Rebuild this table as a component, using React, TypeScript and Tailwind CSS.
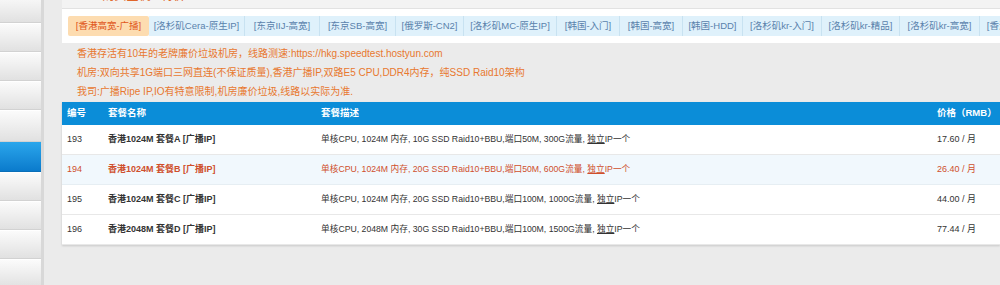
import React from "react";

// ─── Data ─────────────────────────────────────────────────────────────────────

const TABS: [string, string][] = [
  ["[香港高宽-广播]", "w-[81px]"],
  ["[洛杉矶Cera-原生IP]", "w-[96px]"],
  ["[东京IIJ-高宽]", "w-[75px]"],
  ["[东京SB-高宽]", "w-[76px]"],
  ["[俄罗斯-CN2]", "w-[68px]"],
  ["[洛杉矶MC-原生IP]", "w-[93px]"],
  ["[韩国-入门]", "w-[63px]"],
  ["[韩国-高宽]", "w-[63px]"],
  ["[韩国-HDD]", "w-[60px]"],
  ["[洛杉矶kr-入门]", "w-[79px]"],
  ["[洛杉矶kr-精品]", "w-[78px]"],
  ["[洛杉矶kr-高宽]", "w-[80px]"],
  ["[香港高宽-原生]", "w-[80px]"],
];

interface Plan { id: number; name: string; cpu: string; mem: string; disk: string; port: string; flow: string; price: string }

const PLANS: Plan[] = [
  { id: 193, name: "香港1024M 套餐A [广播IP]", cpu: "单核CPU", mem: "1024M", disk: "10G", port: "50M", flow: "300G", price: "17.60" },
  { id: 194, name: "香港1024M 套餐B [广播IP]", cpu: "单核CPU", mem: "1024M", disk: "20G", port: "50M", flow: "600G", price: "26.40" },
  { id: 195, name: "香港1024M 套餐C [广播IP]", cpu: "单核CPU", mem: "1024M", disk: "20G", port: "100M", flow: "1000G", price: "44.00" },
  { id: 196, name: "香港2048M 套餐D [广播IP]", cpu: "单核CPU", mem: "2048M", disk: "30G", port: "100M", flow: "1500G", price: "77.44" },
];

const SIDE = ["h-[29px]", "h-[29px]", "h-[29px]", "h-[29px]", "h-[32px]", "h-[30px]", "h-[29px]", "h-[29px]", "h-[29px]", "h-[29px]"];

const FONT = { fontFamily: '"Liberation Sans", "Noto Sans CJK SC", sans-serif' };

// ─── Main ─────────────────────────────────────────────────────────────────────

export default function App() {
  return (
    <div className="flex w-[1000px] h-[285px] overflow-hidden bg-[#ebebeb]" style={FONT}>
      {/* sidebar */}
      <div className="w-[44px] shrink-0 border-r-[3px] border-[#d8d8d8] bg-[#e6e6e6]">
        <div className="-mt-[6px] w-[41px]">
          {SIDE.map((h, i) => (
            <div
              key={i}
              className={
                i === 5
                  ? `${h} bg-gradient-to-b from-[#2aa6ec] to-[#0a7bcc] border-b border-[#0a6fb8]`
                  : `${h} bg-gradient-to-b from-[#fbfbfb] to-[#e1e1e1] border-t border-white border-b border-b-[#d2d2d2]`
              }
            />
          ))}
        </div>
      </div>

      {/* content */}
      <div className="flex-1 min-w-0 ml-[18px]">
        <div className="h-[9px] overflow-hidden bg-[#f3f3f3] border-b border-[#e2e2e2]">
          <div className="-mt-[12px] pl-[30px] text-[12px] leading-[16px] text-[#e0662a] whitespace-nowrap">
            ■ 购买主机 · 特价
          </div>
        </div>

        <div className="h-[34px] bg-white pl-[6px] pt-[7px] overflow-hidden">
          <div className="flex h-[20px] whitespace-nowrap">
            {TABS.map(([t, w], i) => (
              <div
                key={t}
                className={
                  i === 0
                    ? `${w} shrink-0 h-[20px] text-center leading-[20px] text-[9.5px] rounded-[2px] bg-[#fddcb0] text-[#e0571c]`
                    : `${w} shrink-0 h-[20px] text-center leading-[20px] text-[9.5px] bg-[#dff1fb] text-[#5a82ac] border-r border-[#c8e2f1]`
                }
              >
                {t}
              </div>
            ))}
          </div>
        </div>

        <div className="pl-[15px] pt-[1px] text-[10px] leading-[19px] text-[#e8782f]">
          <p>香港存活有10年的老牌廉价垃圾机房，线路测速:https://hkg.speedtest.hostyun.com</p>
          <p>机房:双向共享1G端口三网直连(不保证质量),香港广播IP,双路E5 CPU,DDR4内存，纯SSD Raid10架构</p>
          <p>我司:广播Ripe IP,IO有特意限制,机房廉价垃圾,线路以实际为准.</p>
        </div>

        <div className="mt-[1px] bg-white shadow-[0_1px_2px_rgba(0,0,0,0.15)]">
          <div className="grid grid-cols-[46px_213px_616px_1fr] h-[23px] items-center bg-[#0b8dd8] text-white text-[9.5px] font-bold">
            <div className="pl-[5px]">编号</div>
            <div>套餐名称</div>
            <div>套餐描述</div>
            <div>价格（RMB）</div>
          </div>
          {PLANS.map(p => {
            const hot = p.id === 194;
            return (
              <div
                key={p.id}
                className={
                  hot
                    ? "grid grid-cols-[46px_213px_616px_1fr] h-[30px] items-center border-b border-[#e6eef3] bg-[#f1f8fd] text-[9px] text-[#cf4f2c]"
                    : "grid grid-cols-[46px_213px_616px_1fr] h-[30px] items-center border-b border-[#e8e8e8] text-[9px] text-[#333]"
                }
              >
                <div className="pl-[5px]">{p.id}</div>
                <div className="font-bold">{p.name}</div>
                <div className="text-[8.7px]">
                  {p.cpu}, {p.mem} 内存, {p.disk} SSD Raid10+BBU,端口{p.port}, {p.flow}流量, <span className="underline">独立</span>IP一个
                </div>
                <div>{p.price} / 月</div>
              </div>
            );
          })}
        </div>
      </div>
    </div>
  );
}
